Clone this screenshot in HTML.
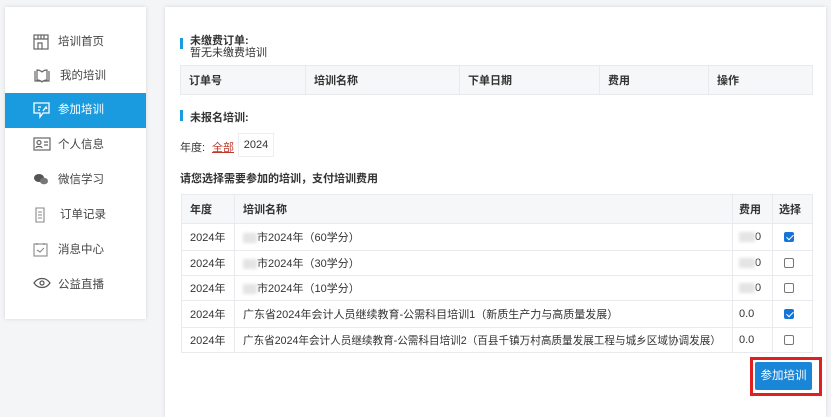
<!DOCTYPE html>
<html><head><meta charset="utf-8"><style>
*{margin:0;padding:0;box-sizing:border-box}
body{width:831px;height:406px;background:#f4f5f7;font-family:"Liberation Sans","Noto Sans CJK SC",sans-serif;font-size:11px;color:#333;position:relative;overflow:hidden}
.side{position:absolute;left:5px;top:7px;width:141px;height:312px;background:#fff;box-shadow:0 0 4px rgba(0,0,0,.12)}
.it{position:absolute;left:0;width:141px;height:35px;line-height:35px;font-size:11.5px;color:#444}
.it svg{position:absolute;left:28px;top:9px}
.it span{position:absolute;left:53px}
.act{background:#1a9be0;color:#fff}
.main{position:absolute;left:165px;top:7px;width:661px;height:410px;background:#fff;box-shadow:0 0 4px rgba(0,0,0,.12)}
.ab{position:absolute}
.bar{position:absolute;width:3px;height:11px;background:#1a9be0}
table{border-collapse:collapse;position:absolute;font-size:11px}
td,th{border:1px solid #e8eaee;padding:0 8px;text-align:left;white-space:nowrap}
th{background:#f6f7f9;font-weight:bold;color:#333}
.cb{display:inline-block;width:10px;height:10px;border:1px solid #777;border-radius:2px;vertical-align:middle;position:relative}
.cb.on{background:#1574d6;border-color:#1574d6}
.cb.on:after{content:"";position:absolute;left:2.5px;top:0px;width:3px;height:6px;border:solid #fff;border-width:0 1.5px 1.5px 0;transform:rotate(45deg)}
.blur{display:inline-block;background:#e4e4e4;filter:blur(1.5px);height:10px;vertical-align:middle}
</style></head><body>
<div class="side">
<div class="it" style="top:18px"><svg width="16" height="16" viewBox="0 0 16 16" fill="none" stroke="#666" stroke-width="1.2"><rect x="1" y="1" width="14" height="14"/><path d="M1 5h14M5 1v4M8 1v4M11 1v4M5 15v-6h4v6"/></svg><span>培训首页</span></div>
<div class="it" style="top:52px"><svg width="18" height="16" viewBox="0 0 18 16" fill="none" stroke="#666" stroke-width="1.2"><path d="M2 3v10h6l1 1 1-1h6V3M4 2c2 0 4 1 5 2 1-1 3-2 5-2v10c-2 0-4 1-5 2-1-1-3-2-5-2z"/></svg><span style="left:55px">我的培训</span></div>
<div class="it act" style="top:86px"><svg width="17" height="17" viewBox="0 0 17 17" fill="none" stroke="#fff" stroke-width="1.3"><path d="M1 1h15v10h-6l-3 4v-4H1z"/><path d="M5 5h3M5 8h2M10 9l3-4 1 2"/></svg><span>参加培训</span></div>
<div class="it" style="top:121px"><svg width="18" height="14" viewBox="0 0 18 14" fill="none" stroke="#666" stroke-width="1.2"><rect x="1" y="1" width="16" height="12"/><circle cx="6" cy="5.5" r="2"/><path d="M3 11c0-2 6-2 6 0M11 5h4M11 8h4"/></svg><span>个人信息</span></div>
<div class="it" style="top:156px"><svg width="16" height="14" viewBox="0 0 16 14"><ellipse cx="6" cy="6" rx="5" ry="4" fill="#555"/><ellipse cx="11" cy="9" rx="4" ry="3.3" fill="#777"/></svg><span>微信学习</span></div>
<div class="it" style="top:191px"><svg width="14" height="16" viewBox="0 0 14 16" fill="none" stroke="#888" stroke-width="1.1"><path d="M3 1h8v14H3zM5 5h4M5 8h4M5 11h4"/></svg><span style="left:55px">订单记录</span></div>
<div class="it" style="top:226px"><svg width="15" height="15" viewBox="0 0 15 15" fill="none" stroke="#888" stroke-width="1.1"><rect x="1" y="2" width="13" height="12"/><path d="M4 1v2M11 1v2M4 8l3 2 4-4"/></svg><span>消息中心</span></div>
<div class="it" style="top:261px"><svg width="18" height="12" viewBox="0 0 18 12" fill="none" stroke="#555" stroke-width="1.2"><path d="M1 6c4-6 12-6 16 0-4 6-12 6-16 0z"/><circle cx="9" cy="6" r="2"/></svg><span>公益直播</span></div>
</div>
<div class="main">
<div class="bar" style="left:15px;top:31px"></div>
<div class="ab" style="left:25px;top:28px;font-weight:bold;line-height:12px">未缴费订单:</div>
<div class="ab" style="left:25px;top:40px;line-height:12px">暂无未缴费培训</div>
<table style="left:15px;top:58px;width:633px;height:30px"><tr><th style="width:125px">订单号</th><th style="width:154px">培训名称</th><th style="width:140px">下单日期</th><th style="width:109px">费用</th><th>操作</th></tr></table>
<div class="bar" style="left:15px;top:103px"></div>
<div class="ab" style="left:25px;top:102px;font-weight:bold">未报名培训:</div>
<div class="ab" style="left:15px;top:132px">年度:</div>
<div class="ab" style="left:47px;top:132px;color:#c0392b;text-decoration:underline">全部</div>
<div class="ab" style="left:73px;top:126px;width:36px;height:24px;border:1px solid #eee;line-height:22px;text-align:center">2024</div>
<div class="ab" style="left:15px;top:163px;font-weight:bold">请您选择需要参加的培训，支付培训费用</div>
<table style="left:16px;top:187px;width:632px">
<tr style="height:29px"><th style="width:53px">年度</th><th>培训名称</th><th style="width:40px;padding:0 6px">费用</th><th style="width:40px;padding:0 6px">选择</th></tr>
<tr style="height:27px"><td>2024年</td><td><span class="blur" style="width:14px"></span>市2024年（60学分）</td><td style="padding:0 6px"><span class="blur" style="width:16px"></span>0</td><td style="padding:0 11px"><span class="cb on"></span></td></tr>
<tr style="height:25px"><td>2024年</td><td><span class="blur" style="width:14px"></span>市2024年（30学分）</td><td style="padding:0 6px"><span class="blur" style="width:16px"></span>0</td><td style="padding:0 11px"><span class="cb"></span></td></tr>
<tr style="height:25px"><td>2024年</td><td><span class="blur" style="width:14px"></span>市2024年（10学分）</td><td style="padding:0 6px"><span class="blur" style="width:16px"></span>0</td><td style="padding:0 11px"><span class="cb"></span></td></tr>
<tr style="height:27px"><td>2024年</td><td>广东省2024年会计人员继续教育-公需科目培训1（新质生产力与高质量发展）</td><td style="padding:0 6px">0.0</td><td style="padding:0 11px"><span class="cb on"></span></td></tr>
<tr style="height:25px"><td>2024年</td><td style="font-size:10.6px">广东省2024年会计人员继续教育-公需科目培训2（百县千镇万村高质量发展工程与城乡区域协调发展）</td><td style="padding:0 6px">0.0</td><td style="padding:0 11px"><span class="cb"></span></td></tr>
</table>
<div class="ab" style="left:585px;top:350px;width:72px;height:39px;border:3px solid #e02020"></div>
<div class="ab" style="left:590px;top:355px;width:57px;height:28px;background:#1a86d8;color:#fff;border-radius:2px;line-height:28px;text-align:center;font-size:11.5px">参加培训</div>
</div>
</body></html>
